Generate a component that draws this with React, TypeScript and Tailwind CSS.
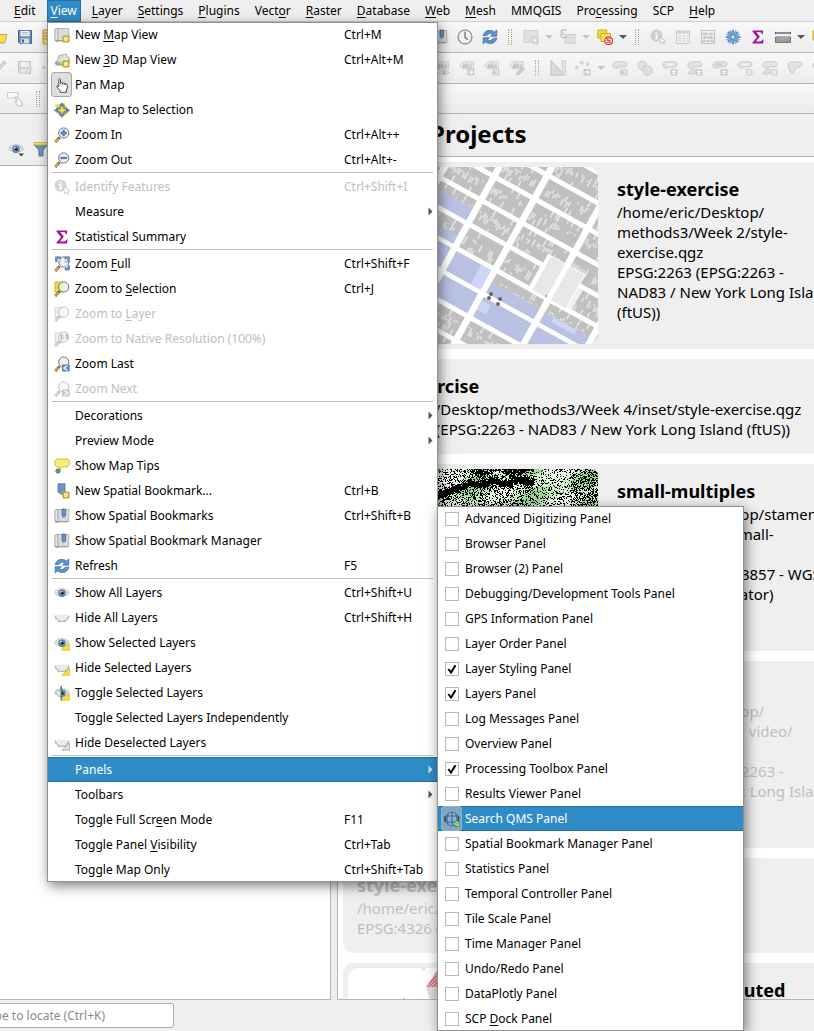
import React, { useMemo } from 'react';

type IconProps = { name: string; dim?: boolean };

const star = (
  <g>
    <rect x="8.5" y="8.5" width="7" height="7" rx="1" fill="#c9a81c" />
    <path d="M12 9.700v4.600M10 10.800l4 2.400M14 10.800l-4 2.400" stroke="#fff" strokeWidth="1.200" />
    <circle cx="12" cy="12" r=".7" fill="#c9a81c" />
  </g>
);

const lens = (
  <g>
    <path d="M5.600 10.400L1.200 15" stroke="#5b4a25" strokeWidth="2.600" />
    <path d="M4.800 11.400L1.200 14.900" stroke="#e5b73b" strokeWidth="1.500" />
    <circle cx="9.700" cy="6" r="5.100" fill="#eeefeb" fillOpacity=".92" stroke="#77797a" strokeWidth="1" />
  </g>
);

const eye = (
  <g>
    <path d="M.8 8.500Q8 2.500 15.200 8.500Q8 14 .8 8.500z" fill="#f1f1ef" stroke="#b5b8b8" strokeWidth="1" />
    <path d="M.8 6.500Q8 .8 15.200 6.500" fill="none" stroke="#b0b3b3" strokeWidth=".9" />
    <circle cx="8" cy="8.200" r="3.400" fill="#6b96c4" stroke="#48698f" strokeWidth=".8" />
    <circle cx="8.300" cy="8.200" r="1.500" fill="#17222e" />
    <circle cx="6.900" cy="6.800" r=".7" fill="#fff" />
  </g>
);

const lid = (
  <g>
    <path d="M1.500 5.500Q8 3.500 14.500 5.500Q13.500 11 8 11.500Q2.500 11 1.500 5.500z" fill="#ebebe8" />
    <path d="M1 5.500Q2 11 8 11.500Q14 11 15 5.500M1.500 9l1.500-1M4 12l1-1.500M14.500 9L13 8M12 12l-1-1.500" fill="none" stroke="#a5a6a5" strokeWidth="1" />
  </g>
);

const book = (
  <g>
    <path d="M.8 2.500Q2.500 .8 4 1.500V13.500H1z" fill="#e9e9e9" stroke="#8f8f8f" strokeWidth=".8" />
    <path d="M4 1.500h10.800v12H4z" fill="#dadada" stroke="#a9a9a9" strokeWidth=".8" />
    <path d="M1 13.500Q3 15.500 5 13.800H14" fill="none" stroke="#8f8f8f" strokeWidth=".9" />
  </g>
);

const label = (
  <g>
    <path d="M.5 5.500L4 1.500H14.500V9H4z" fill="#d9d6be" stroke="#a9a795" strokeWidth=".8" />
    <path d="M4 4.800h2v3H4V6.300h2M7.500 2.800v5h1.800V5H7.500M13 5h-1.800v2.800H13" fill="none" stroke="#66665f" strokeWidth=".8" />
  </g>
);

const blob = (
  <path d="M.8 5Q1.500 .8 7 2Q14.500 .5 15.200 4Q15 7.500 11 7Q7 6 5.500 8Q.8 8.500 .8 5z" fill="#cfcfc6" stroke="#8f8f88" strokeWidth=".9" />
);

const badge = <rect x="8.500" y="9" width="7" height="6.500" rx="1" fill="#9c9c97" />;
const arrow = <path d="M9.500 12.200h4M11.800 10.200l2.200 2-2.200 2" stroke="#fff" strokeWidth="1.200" fill="none" />;
const turn = <path d="M10.500 13.800Q13.800 14.500 13.800 12T10.500 10.800" stroke="#fff" strokeWidth="1.200" fill="none" />;
const spark = <path d="M12 9.800v4.800M10 10.900l4 2.500M14 10.900l-4 2.500" stroke="#fff" strokeWidth="1.200" />;
const cross = (
  <g>
    <rect x="9" y="9" width="6.500" height="6.500" rx="1" fill="#cfa9a3" />
    <path d="M10.500 10.500l3.500 3.500M14 10.500l-3.500 3.500" stroke="#fff" strokeWidth="1.200" />
  </g>
);
const tail = <path d="M.8 13.500Q3 9 8 9V13Q4 15.500 .8 13.500z" fill="#cfcfc6" stroke="#8f8f88" strokeWidth=".8" />;

const refresh = (
  <g fill="#5d93cf" stroke="#3669a8" strokeWidth=".7">
    <path d="M1 6.500Q3 1 8.500 1.400Q11 1.700 12.500 3L14.800 1V7.200H8.600L10.600 5Q7.500 2.800 4.800 6.500z" />
    <path d="M15 9.200Q13 14.900 7.500 14.500Q5 14.200 3.500 12.900L1.200 14.900V8.700H7.400L5.400 10.900Q8.500 13.100 11.200 9.200z" />
  </g>
);

const cursor = <path d="M9.500 7.500L10.500 15l1.700-1.800 1.500 2.300 1.200-.8-1.500-2.200 2.100-.7z" fill="#fff" stroke="#7b7b7b" strokeWidth=".8" />;

const glyphs: Record<string, React.ReactNode> = {
  mapview: <g>{book}{star}</g>,
  map3d: (
    <g>
      <path d="M2 11L5 3.500l7-1.500 3.500 5v4z" fill="#d2d3d1" stroke="#a4a6a4" strokeWidth=".8" />
      <path d="M4 8l9.500-2M7 3.500l1.500 7M10 3l3.500 7" stroke="#f4f4f4" strokeWidth=".9" />
      <path d="M.5 10.500Q3 8 5.500 11.500H9v2H2z" fill="#9fa2a0" />
      {star}
    </g>
  ),
  hand: (
    <path
      d="M4.800 9V2.400Q5.500 1 6.500 2.400V6.500M6.500 6.200Q7.500 4.800 8.700 6.200M8.700 6.200V7.500M8.700 6.500Q9.800 5.300 11 6.700V8M11 7.200Q13.200 6.200 13.300 8.500V11L12.300 13V15.300H6.300V14L2.500 9.300Q2.800 7.800 4.800 9.700V9"
      fill="#fff"
      stroke="#4a4a4a"
      strokeWidth="1"
      strokeLinejoin="round"
    />
  ),
  panselect: (
    <g>
      <path d="M.8 2.500L10.500 1 14.500 9 12.500 13 5 14z" fill="#f3df4b" />
      <g fill="#5d87b5" stroke="#3f6590" strokeWidth=".5">
        <path d="M8 .8l2.600 3.400H5.400zM8 15.500l3-3.800H5zM.3 8.300l3.800-2.800v5.600zM15.700 8.300l-3.800-2.800v5.600zM5 5.500l2 .3-1.500 1.700zM11 5.500l-2 .3 1.500 1.700zM5 11l2-.3-1.500-1.700zM11 11l-2-.3 1.500-1.700z" />
      </g>
      <circle cx="8" cy="8.300" r="1.500" fill="#f3df4b" />
    </g>
  ),
  zoomin: <g>{lens}<path d="M9.700 2.800v6.400M6.500 6h6.400" stroke="#4f80b8" strokeWidth="2.400" /></g>,
  zoomout: <g>{lens}<path d="M6.300 6h6.800" stroke="#4f80b8" strokeWidth="2.200" /></g>,
  identify: (
    <g>
      <circle cx="6.500" cy="6.500" r="5.600" fill="#9ba6b1" stroke="#84909b" strokeWidth=".8" />
      <path d="M6.500 2.800v1.600M5.300 5.800h1.400V9.500M5 9.600h3" stroke="#fff" strokeWidth="1.500" fill="none" />
      {cursor}
    </g>
  ),
  sigma: <path d="M2.500 1.500H13V5H12Q11.500 3 9.500 3H6.300L9.800 7.700 5.900 12.600H10Q12 12.600 12.500 10.500H13.500L13 14.500H2.500V13.600L7 8.200 2.500 2.400z" fill="#a3129f" />,
  zoomfull: (
    <g>
      {lens}
      <path d="M1.500 .8h5v5h-5zM11 .8h4.500v5H11zM11 9.500h4.500V14H11z" fill="#6b94c1" stroke="#4d7199" strokeWidth=".6" />
      <path d="M4 3.500l3.500 2.500M13 3.500l-3 2M13 11l-3-3M7 3.800h-3v2.800M10.500 3.800h2.500v2M13 8.500V11h-2.500" stroke="#f3f5f7" strokeWidth="1" fill="none" />
    </g>
  ),
  zoomsel: <g><path d="M1 1h8v10H1z" fill="#f0d73b" stroke="#c4a926" strokeWidth=".8" />{lens}<path d="M6.500 3Q9 1.500 9.500 10Q6 9.500 6.500 3z" fill="#f5eeb4" /></g>,
  zoomlayer: <g><path d="M1 1.500h8v10H1z" fill="#ddd" stroke="#999" strokeWidth=".8" />{lens}</g>,
  zoomnative: (
    <g>
      <path d="M1 2h8v10H1z" fill="#ddd" stroke="#999" strokeWidth=".8" />
      {lens}
      <path d="M6.500 4.500l1-.7V8.500M12 4.500l1-.7V8.500M9.800 4.500v1M9.800 7v1" stroke="#333" strokeWidth="1.200" fill="none" />
    </g>
  ),
  zoomlast: <g>{lens}<rect x="8" y="8.500" width="7.800" height="7" fill="#5f8cc0" /><path d="M13.300 9.800L10 12l3.300 2.200" stroke="#fff" strokeWidth="1.300" fill="none" /></g>,
  zoomnext: <g>{lens}<rect x="8" y="8.500" width="7.800" height="7" fill="#888" /><path d="M10.500 9.800L13.800 12l-3.300 2.200" stroke="#fff" strokeWidth="1.300" fill="none" /></g>,
  tips: (
    <g>
      <path d="M3 1H13.500Q15.500 1.500 15.400 5T13 9H8.500L5.500 12V9H3Q.8 8.500 .8 5T3 1z" fill="#f8ec74" stroke="#cdb741" strokeWidth=".9" />
      <circle cx="4" cy="13" r="2.300" fill="#67997a" stroke="#49705a" strokeWidth=".6" />
    </g>
  ),
  newbm: <g><path d="M4 .8H11V13L7.500 11.500 4 9z" fill="#6b96c4" stroke="#4d759f" strokeWidth=".8" />{star}</g>,
  bookmarks: <g>{book}<path d="M8 1h3.600v6.800L9.800 9.500 8 7.800z" fill="#6590c0" stroke="#3e6798" strokeWidth=".7" /></g>,
  refresh,
  eye,
  lid,
  eyesel: <g>{eye}<path d="M8 15.200h7.500V8.500L13 10.500 8 12.500z" fill="#f7e03b" stroke="#d4b91b" strokeWidth=".6" /></g>,
  lidsel: <g><path d="M8 15.200h7.500V8z" fill="#f7e03b" stroke="#d4b91b" strokeWidth=".8" />{lid}</g>,
  toggle: <g>{eye}<path d="M8 15.200h7.500V8.500L13 10.500 8 12.500z" fill="#f7e03b" stroke="#d4b91b" strokeWidth=".6" /><path d="M1.500 6.500Q4 5 7 5V12Q2.500 11.500 1.500 6.500z" fill="#e4e4e1" stroke="#a5a6a5" strokeWidth=".7" /><path d="M7.300 1v14.500" stroke="#47805a" strokeWidth="1.400" /></g>,
  liddesel: <g><path d="M8 15.200h7.500V8z" fill="#e3e3e3" stroke="#a8a8a8" strokeWidth=".8" />{lid}</g>,
  globe: (
    <g>
      <circle cx="8" cy="8" r="6.800" fill="#8fb0cc" stroke="#47709a" strokeWidth="1" />
      <path d="M8 1v14M4.500 2.500Q1.500 8 4.500 13.500M11.500 2.500Q14.500 8 11.500 13.500M2 5h12M2 11h12" stroke="#3a69a3" strokeWidth="1.100" fill="none" />
      <path d="M1 5v6M.5 8h2M14.500 5v5" stroke="#34404c" strokeWidth="1.400" />
      <rect x="10" y="10" width="6" height="6" rx="1" fill="#4e9c58" />
      <circle cx="12.800" cy="12.600" r="1.400" fill="none" stroke="#fff" strokeWidth=".8" />
      <path d="M14 14l1 1" stroke="#fff" />
    </g>
  ),
  folder: <path d="M0 4h6l1.500 1.500H15L12.500 14H0z" fill="#fbdc55" stroke="#c9a227" strokeWidth=".9" />,
  save: (
    <g>
      <path d="M1.500 1.500h13v13H3l-1.500-1.500z" fill="#6c8fb5" stroke="#446587" strokeWidth="1" />
      <path d="M3.500 1.800h9v5.400h-9z" fill="#eef1f4" />
      <path d="M4 9.500h8v5H4z" fill="#d6dde5" />
      <path d="M5 10.500h2v3H5z" fill="#446587" />
      <path d="M5 3.500h6M5 5.300h6" stroke="#9aa9b8" strokeWidth=".7" />
    </g>
  ),
  layout: <path d="M1 1h13v14H1zM1 4h4M1 7h4M1 10h4" fill="#f4dc72" stroke="#b89a32" strokeWidth="1" />,
  pencil: <path d="M2 14L4 9 12 1l2 2-8 8z" fill="#bbb" stroke="#888" />,
  saveedit: (
    <g>
      <path d="M1.500 1.500h12v12H3l-1.500-1.500z" fill="#b5b5b5" stroke="#888" />
      <path d="M3.500 1.800h8v5h-8z" fill="#eee" />
      <path d="M4 9h6v4.500H4z" fill="#ddd" />
      <path d="M8 14l1-3 4-4 2.500 2-4.500 4.500z" fill="#ccc" stroke="#999" strokeWidth=".7" />
    </g>
  ),
  dots: (
    <g>
      <g fill="#b4b4ac" stroke="#8e8e88" strokeWidth=".7">
        <circle cx="1.800" cy="7.500" r="1.300" /><circle cx="6.500" cy="2.500" r="1.500" /><circle cx="12.500" cy="4" r="1.500" />
      </g>
      {badge}
      {arrow}
    </g>
  ),
  clock: (
    <g>
      <circle cx="8" cy="8" r="7" fill="#f2f3f1" stroke="#858987" strokeWidth="1.200" />
      <path d="M8 3v5.200l2.800 2.600" fill="none" stroke="#6a6d6c" strokeWidth="1.300" />
      <path d="M8 1.500v1M8 13.500v1M1.500 8h1M13.500 8h1" stroke="#858987" />
    </g>
  ),
  select: <g><path d="M1 1.500h14v12H1z" fill="#d0ccb2" stroke="#88887f" strokeWidth="1" strokeDasharray="2 1.200" />{cursor}</g>,
  selectexp: (
    <g>
      <rect x="5" y="5.500" width="10" height="9" fill="#cdc9ae" stroke="#a09d8c" strokeWidth=".8" />
      <path d="M6.500 1.500Q3 0 1.500 2T4 4.500Q0 5 1.500 7.500T7 7.500" fill="none" stroke="#7a7a74" strokeWidth="1.400" />
    </g>
  ),
  deselect: (
    <g>
      <path d="M.8 1h9v8h-9z" fill="#f5da3c" stroke="#c8a81c" strokeWidth=".9" />
      <path d="M4 4.500h9.500v8H4z" fill="#fbe552" stroke="#c8a81c" strokeWidth=".9" />
      <circle cx="11.700" cy="11.700" r="3.900" fill="#fff" stroke="#d9342f" strokeWidth="1.300" />
      <path d="M9.500 9.800h4.400M9.300 11.700h4.800M9.600 13.500h4.200M9.200 9.200l5 5" stroke="#d9342f" strokeWidth=".9" />
    </g>
  ),
  table: (
    <g>
      <rect x="1.500" y="2" width="13" height="12.500" fill="#f3f3f3" stroke="#999" strokeWidth=".9" />
      <path d="M1.500 2h13v2.500h-13z" fill="#aaa" />
      <path d="M3 7h3M7.500 7h2.500M11.500 7h2M3 9.500h3M7.500 9.500h2.500M11.500 9.500h2M3 12h3M7.500 12h2.500M11.500 12h2" stroke="#aaa" />
    </g>
  ),
  abacus: (
    <g fill="none" stroke="#8c8c8c">
      <rect x="1.500" y="1.500" width="13" height="13" />
      <path d="M1.500 5h13M1.500 8.500h13M1.500 12h13" />
      <path d="M4 3.500v3M6.500 3.500v3M11 3.500v3M5 7v3M9 7v3M11.500 7v3M4 10.500v3M8 10.500v3M12 10.500v3" strokeWidth="1.500" />
    </g>
  ),
  gear: (
    <g>
      <g stroke="#5d92cc" strokeWidth="2.200">
        <path d="M8 .8v14.400M.8 8h14.400M2.900 2.900l10.200 10.200M13.100 2.900L2.900 13.100" />
        <path d="M5.200 1.300l5.600 13.400M10.800 1.300L5.200 14.700M1.300 5.200l13.400 5.600M1.300 10.800l13.400-5.600" strokeWidth="1" />
      </g>
      <circle cx="8" cy="8" r="5" fill="#6d9dd2" />
      <circle cx="8" cy="8" r="2" fill="#edf2f7" stroke="#4679b2" strokeWidth=".8" />
    </g>
  ),
  measure: (
    <g>
      <path d="M.5 4h15" stroke="#4c6184" strokeWidth="1.400" />
      <path d="M.5 2.800v2.400M15.500 2.800v2.400" stroke="#4c6184" />
      <path d="M.5 8h15v5.500H.5z" fill="#9b9b9b" stroke="#6d6d6d" strokeWidth=".9" />
      <path d="M3 8v2M5.500 8v2M8 8v3M10.500 8v2M13 8v2" stroke="#ddd" strokeWidth=".6" />
    </g>
  ),
  tip2: <path d="M1 2h14v9H1z" fill="#f8e45c" stroke="#c8a81c" />,
  labeleye: <g>{label}<path d="M5 12.500Q10 8 15.500 12.500Q10 16.500 5 12.500z" fill="#eee" stroke="#777" strokeWidth=".8" /><circle cx="10.300" cy="12.400" r="1.600" fill="#777" /></g>,
  labelmove: <g>{label}{badge}{arrow}</g>,
  labelrot: <g>{label}{badge}{turn}</g>,
  labeledit: <g>{label}<path d="M7.500 15l1-3 5-4.500 2 2-5 4.500z" fill="#a5a59b" stroke="#777" strokeWidth=".7" /></g>,
  cad: (
    <g>
      <path d="M1 1v14H14z" fill="#dcc5bf" stroke="#92807b" strokeWidth="1.100" />
      <path d="M4 8.500v3.500h3.500z" fill="#f5f5f5" stroke="#92807b" strokeWidth=".7" />
      <path d="M12 .5h3.500v14H12z" fill="#d2d2c2" stroke="#999" strokeWidth=".7" />
    </g>
  ),
  blobrot: <g>{blob}{badge}{turn}</g>,
  simplify: <g fill="#cdcdc4" stroke="#8f8f88" strokeWidth=".9"><path d="M.8 3.500l3.500-2.500 4.500 1.500 1.500 5-5 2.500-3.500-2z" /><circle cx="10.500" cy="10.500" r="4.700" /><path d="M5.500 5.500l5.500 5.500" /></g>,
  ring: <g>{blob}<path d="M5 4.500h6" stroke="#fff" strokeWidth="1.800" />{badge}{spark}</g>,
  part: <g>{blob}{tail}{badge}{spark}</g>,
  fillring: <g>{blob}<ellipse cx="7" cy="4.500" rx="3.500" ry="1.500" fill="#aaa" />{badge}{spark}</g>,
  delring: <g>{blob}<path d="M5 4.500h6" stroke="#fff" strokeWidth="1.800" />{cross}</g>,
  delpart: <g>{blob}{tail}{cross}</g>,
  reshape: <path d="M1 4Q2 .8 8 2Q15.500 .8 15 5Q14 8 10.500 7.500Q7.500 9 5.500 14Q1 10 1 4z" fill="#cfcfc6" stroke="#8f8f88" strokeWidth=".9" />,
  selecthand: (
    <g>
      <path d="M.5 1.500h10.500v5.500H.5z" fill="#fff" stroke="#999" strokeWidth=".9" />
      <path d="M8.500 6l1.500 4.500-2-.5 2.500 5H15V10.500L12 9 9.500 5.500z" fill="#fff" stroke="#777" strokeWidth=".9" />
    </g>
  ),
  filter: (
    <g>
      <path d="M1 3.500h14L10 9v6H6V9z" fill="#6b96c4" stroke="#48719c" strokeWidth=".9" />
      <path d="M1 1.500h14v2.500H1z" fill="#f2e34f" stroke="#bba92d" strokeWidth=".7" />
    </g>
  ),
  eyedrop: <g>{eye}<path d="M10.500 12.500h5.500L13.300 15.500z" fill="#444" /></g>,
};

function Icon({ name, dim }: IconProps) {
  return (
    <svg viewBox="0 0 16 16" aria-hidden="true" className={dim ? 'h-4 w-4 shrink-0 opacity-45 grayscale-75' : 'h-4 w-4 shrink-0'}>
      {glyphs[name]}
    </svg>
  );
}

/* "_" before a letter marks its mnemonic. */
function Mnemonic({ text }: { text: string }) {
  const i = text.indexOf('_');
  if (i < 0) return <>{text}</>;
  return (
    <>
      {text.slice(0, i)}
      <span className="underline underline-offset-2">{text[i + 1]}</span>
      {text.slice(i + 2)}
    </>
  );
}

const menuTitles = ['_Edit', '_View', '_Layer', '_Settings', '_Plugins', 'Vect_or', '_Raster', '_Database', '_Web', '_Mesh', 'MMQGIS', 'Pro_cessing', 'SCP', '_Help'];

function MenuBar() {
  return (
    <nav className="flex h-[22px] shrink-0 gap-[7px] border-b border-[#cfcfcf] bg-[#efefef] pl-[10px]">
      {menuTitles.map((t) => (
        <button
          key={t}
          className={
            t === '_View'
              ? 'h-[22px] border border-[#2472a4] bg-[#308cc6] px-[3px] text-white'
              : 'h-[22px] px-1'
          }
        >
          <Mnemonic text={t} />
        </button>
      ))}
    </nav>
  );
}

function Tool({ name, dim }: IconProps) {
  return (
    <button aria-label={name} className="flex h-full w-[25px] shrink-0 items-center justify-center">
      <Icon name={name} dim={dim} />
    </button>
  );
}

function Caret({ dim }: { dim?: boolean }) {
  return (
    <svg viewBox="0 0 12 12" aria-hidden="true" className="h-3 w-3 shrink-0">
      <path d="M2 4h8L6 8z" fill={dim ? '#c4c4c4' : '#555'} />
    </svg>
  );
}

function Handle() {
  return (
    <span className="flex h-full w-4 shrink-0 items-center justify-center gap-[2px]">
      <span className="h-4 border-l border-dotted border-[#a5a5a5]" />
      <span className="h-4 border-l border-dotted border-[#a5a5a5]" />
    </span>
  );
}

const toolbar = 'flex shrink-0 items-center overflow-hidden border-b border-[#b4b4b4] bg-linear-to-b from-[#f8f8f8] to-[#ececec]';

function Toolbars() {
  return (
    <>
      <div className={toolbar + ' h-[31px]'}>
        <div className="-ml-[13px] flex h-full items-center">
          <Tool name="folder" /><Tool name="save" /><Tool name="layout" />
          <span className="w-[365px] shrink-0" />
          <Tool name="bookmarks" /><Tool name="clock" /><Tool name="refresh" />
          <Handle />
          <Tool name="select" dim /><Caret dim />
          <Tool name="selectexp" dim /><Caret dim />
          <Tool name="deselect" /><Caret />
          <Handle />
          <Tool name="identify" dim /><Tool name="table" dim /><Tool name="abacus" dim />
          <Tool name="gear" /><Tool name="sigma" /><Tool name="measure" /><Caret />
          <Tool name="tip2" />
        </div>
      </div>
      <div className={toolbar + ' h-[31px]'}>
        <div className="-ml-[13px] flex h-full items-center">
          <Tool name="pencil" dim /><Tool name="saveedit" dim /><Tool name="dots" dim />
          <span className="w-[367px] shrink-0" />
          <Tool name="labeleye" dim /><Tool name="labelmove" dim /><Tool name="labelrot" dim /><Tool name="labeledit" dim />
          <Handle />
          <Tool name="cad" dim /><Tool name="dots" dim /><Caret dim />
          <Tool name="blobrot" dim /><Tool name="simplify" dim /><Tool name="ring" dim /><Tool name="part" dim />
          <Tool name="fillring" dim /><Tool name="delring" dim /><Tool name="delpart" dim /><Tool name="reshape" dim />
          <Tool name="blobrot" dim />
        </div>
      </div>
      <div className={toolbar + ' h-[30px] gap-[3px] pl-[2px]'}>
        <Tool name="selecthand" dim />
        <Handle />
      </div>
    </>
  );
}

function random(seed: number) {
  let s = seed;
  return () => {
    s = (s * 1664525 + 1013904223) % 4294967296;
    return s / 4294967296;
  };
}

const avenues = [-190, -140, -94, -46, 0, 61, 118, 170];
const blueBlocks: Record<string, number> = { '2:-2': 0.6, '2:-1': 0.4, '2:0': 1, '3:0': 1, '3:1': 0.9, '4:0': 0.55, '4:1': 0.7, '5:0': 0.5, '5:1': 0.8, '1:-2': 0.8 };

/* Street grid drawn unrotated, blocks 27 units apart along each avenue. */
function CityMap() {
  const parts = useMemo(() => {
    const rnd = random(7);
    const out: React.ReactNode[] = [];
    for (let a = 0; a < avenues.length - 1; a++) {
      for (let r = -8; r < 6; r++) {
        let x = avenues[a] + 4;
        let w = avenues[a + 1] - avenues[a] - 7;
        const y = r * 27 + 3;
        const h = 22;
        const k = a + ':' + r;
        if (a === 4 && r === -1) w = 34;
        if (a === 5 && r === -1) {
          x += 22;
          w -= 22;
        }
        out.push(<rect key={k} x={x} y={y} width={w} height={h} fill="#c0c0c0" />);
        let d = '';
        for (let i = 2; i < w - 3; i += 2.5) {
          if (rnd() < 0.75) d += `M${x + i} ${y + 6 + rnd() * 5}v${1 + rnd() * 8}`;
          if (rnd() < 0.22) d += `M${x + i} ${y}v${3 + rnd() * 4}`;
          if (rnd() < 0.22) d += `M${x + i} ${y + h}v-${3 + rnd() * 4}`;
        }
        out.push(<path key={k + 'c'} d={d} stroke="#e2e2e2" strokeWidth="1.800" />);
        const share = blueBlocks[k];
        if (share) {
          const top = share < 0.7 ? y + h * (1 - share) : y;
          out.push(<rect key={k + 'f'} x={x} y={top} width={w} height={y + h - top} fill="#b9c2e2" />);
          if (k === '3:0') out.push(<rect key={k + 'p'} x={x + w - 11} y={y} width={11} height={h} fill="#ccd6f6" />);
          if (k === '4:1') out.push(<rect key={k + 'p'} x={x} y={y + 4} width={10} height={10} fill="#ccd6f6" />);
          if (k === '5:0') out.push(<rect key={k + 'p'} x={x + 10} y={top} width={26} height={5} fill="#ccd6f6" />);
        }
      }
    }
    return out;
  }, []);
  return (
    <svg viewBox="0 0 250 177" aria-hidden="true" className="h-[177px] w-[250px] shrink-0 rounded-[10px]">
      <rect width="250" height="177" fill="#efefef" />
      <g transform="translate(147 102) rotate(29)">
        {avenues.map((x) => (
          <rect key={x} x={x - 3} y="-220" width="6" height="440" fill="#fff" />
        ))}
        {[-7, -6, -5, -4, -3, -2, -1, 0, 1, 2, 3, 4].map((r) => (
          <rect key={r} x="-220" y={r * 27 - 2} width="440" height="5" fill="#fff" />
        ))}
        {parts}
        <path d="M39 -39h43v42h-43z" fill="#fff" />
        <path d="M43 -38h16v38h-16zM64 -38h17v38h-17z" fill="#e8e8e8" />
      </g>
      <g fill="#6a6a6a">
        <circle cx="143" cy="127" r="2" /><circle cx="141" cy="131" r="2" /><circle cx="152" cy="132" r="2" /><circle cx="150" cy="137" r="2" />
        <circle cx="198" cy="129" r="1" fill="#999" />
      </g>
    </svg>
  );
}

function StippleMap() {
  const { black, greens } = useMemo(() => {
    const rnd = random(21);
    let b = '';
    const g = ['', '', ''];
    for (let y = 0; y < 44; y++) {
      for (let x = 80; x < 250; x++) {
        const mid = x < 120 ? 26 - (x - 90) * 0.35 : 15 - (x - 120) * 0.06 + Math.sin(x / 4) * 1.5;
        const off = Math.abs(y - mid);
        let p = x > 222 ? 0.5 : x > 186 ? 0.24 : 0.36;
        if (x < 186) p = Math.max(p, 1.25 - off / 7);
        if (x > 122 && x < 186 && y < 14 && Math.sin(x / 5) + Math.cos(y / 3) > 0) p = 0.85;
        if (rnd() < p) b += `M${x} ${y}h1v1h-1z`;
        else {
          const tone = Math.sin(x / 9) + Math.cos(y / 5 + x / 14) + rnd() * 1.4;
          const i = tone > 1.5 ? 0 : tone > 0.6 ? 1 : tone > -0.6 ? 2 : -1;
          if (i >= 0) g[i] += `M${x} ${y}h1v1h-1z`;
        }
      }
    }
    return { black: b, greens: g };
  }, []);
  return (
    <svg viewBox="0 0 250 177" aria-hidden="true" shapeRendering="crispEdges" className="h-[177px] w-[250px] shrink-0 rounded-[6px] bg-[#f4faf2]">
      <path d={greens[0]} fill="#9bd397" />
      <path d={greens[1]} fill="#c3e6bd" />
      <path d={greens[2]} fill="#dff2db" />
      <path d={black} fill="#000" />
    </svg>
  );
}

function BoroughMap() {
  return (
    <svg viewBox="0 0 250 177" aria-hidden="true" className="h-[177px] w-[250px] shrink-0 rounded-[10px] bg-white">
      <defs>
        <pattern id="hatch" width="2.500" height="2.500" patternUnits="userSpaceOnUse" patternTransform="rotate(45)">
          <rect width="2.500" height="2.500" fill="#f0c4ca" />
          <rect width="1.300" height="2.500" fill="#d0596b" />
        </pattern>
      </defs>
      <path d="M78 19L91 0H150V19z" fill="url(#hatch)" />
      <path d="M78 19H150V60H78L82 32z" fill="#dcdcdc" />
      <path d="M54 33l2-3 2 3zM74 1h3M65 32h2" fill="#bbb" stroke="#bbb" />
    </svg>
  );
}

type Project = { title: string; lines: string[]; thumb?: React.ReactNode; missing?: boolean };

const projects: Project[] = [
  {
    title: 'style-exercise',
    lines: ['/home/eric/Desktop/', 'methods3/Week 2/style-', 'exercise.qgz', 'EPSG:2263 (EPSG:2263 -', 'NAD83 / New York Long Island', '(ftUS))'],
    thumb: <CityMap />,
  },
  {
    title: 'style-exercise',
    lines: ['/home/eric/Desktop/methods3/Week 4/inset/style-exercise.qgz', 'EPSG:2263 (EPSG:2263 - NAD83 / New York Long Island (ftUS))'],
  },
  {
    title: 'small-multiples',
    lines: ['/home/eric/Desktop/stamen-', 'multiples-maps/small-', 'multiples.qgz', 'EPSG:3857 (EPSG:3857 - WGS', '84 / Pseudo-Mercator)'],
    thumb: <StippleMap />,
  },
  {
    title: 'style-exercise',
    lines: ['/home/eric/Desktop/', 'methods3/Week 5 video/', 'style-exercise.qgz', 'EPSG:2263 (EPSG:2263 -', 'NAD83 / New York Long Island'],
    thumb: <span className="h-[177px] w-[250px] shrink-0 rounded-[10px] bg-white" />,
    missing: true,
  },
  {
    title: 'style-exercise',
    lines: ['/home/eric/Desktop/style-exercise.qgz', 'EPSG:4326 (EPSG:4326 - WGS 84)'],
    missing: true,
  },
  {
    title: 'shapes-distributed',
    lines: ['/home/eric/Desktop/'],
    thumb: <BoroughMap />,
  },
];

function ProjectCard({ project }: { project: Project }) {
  return (
    <li
      className={
        (project.thumb ? 'gap-[5px] p-[5px] ' : 'px-0 ') +
        'flex shrink-0 rounded-l-[10px] bg-[#efefef] ' +
        (project.missing ? 'text-[#bfbfbf]' : 'text-black')
      }
    >
      {project.thumb}
      <div className={project.thumb ? 'pt-[9px] pl-[14px]' : 'px-[14px] pt-[14px] pb-[15px]'}>
        <h2 className="text-[18px] leading-[26px] font-bold whitespace-nowrap">{project.title}</h2>
        {project.lines.map((l) => (
          <p key={l} className="text-[15px] leading-[20px] whitespace-nowrap">{l}</p>
        ))}
      </div>
    </li>
  );
}

type Entry = { icon?: string; text: string; keys?: string; off?: boolean; sub?: boolean; on?: boolean; pressed?: boolean } | null;

const entries: Entry[] = [
  { icon: 'mapview', text: 'New _Map View', keys: 'Ctrl+M' },
  { icon: 'map3d', text: 'New _3D Map View', keys: 'Ctrl+Alt+M' },
  { icon: 'hand', text: 'Pan Map', pressed: true },
  { icon: 'panselect', text: 'Pan Map to Selection' },
  { icon: 'zoomin', text: 'Zoom In', keys: 'Ctrl+Alt++' },
  { icon: 'zoomout', text: 'Zoom Out', keys: 'Ctrl+Alt+-' },
  null,
  { icon: 'identify', text: 'Identify Features', keys: 'Ctrl+Shift+I', off: true },
  { text: 'Measure', sub: true },
  { icon: 'sigma', text: 'Statistical Summary' },
  null,
  { icon: 'zoomfull', text: 'Zoom _Full', keys: 'Ctrl+Shift+F' },
  { icon: 'zoomsel', text: 'Zoom to _Selection', keys: 'Ctrl+J' },
  { icon: 'zoomlayer', text: 'Zoom to _Layer', off: true },
  { icon: 'zoomnative', text: 'Zoom to Native Resolution (100%)', off: true },
  { icon: 'zoomlast', text: 'Zoom Last' },
  { icon: 'zoomnext', text: 'Zoom Next', off: true },
  null,
  { text: 'Decorations', sub: true },
  { text: 'Preview Mode', sub: true },
  { icon: 'tips', text: 'Show Map Tips' },
  { icon: 'newbm', text: 'New Spatial Bookmark...', keys: 'Ctrl+B' },
  { icon: 'bookmarks', text: 'Show Spatial Bookmarks', keys: 'Ctrl+Shift+B' },
  { icon: 'bookmarks', text: 'Show Spatial Bookmark Manager' },
  { icon: 'refresh', text: 'Refresh', keys: 'F5' },
  null,
  { icon: 'eye', text: 'Show All Layers', keys: 'Ctrl+Shift+U' },
  { icon: 'lid', text: 'Hide All Layers', keys: 'Ctrl+Shift+H' },
  { icon: 'eyesel', text: 'Show Selected Layers' },
  { icon: 'lidsel', text: 'Hide Selected Layers' },
  { icon: 'toggle', text: 'Toggle Selected Layers' },
  { text: 'Toggle Selected Layers Independently' },
  { icon: 'liddesel', text: 'Hide Deselected Layers' },
  null,
  { text: 'Panels', sub: true, on: true },
  { text: 'Toolbars', sub: true },
  { text: 'Toggle Full Scr_een Mode', keys: 'F11' },
  { text: 'Toggle Panel _Visibility', keys: 'Ctrl+Tab' },
  { text: 'Toggle Map Only', keys: 'Ctrl+Shift+Tab' },
];

function ViewMenu() {
  return (
    <div role="menu" className="absolute top-[22px] left-[47px] flex w-[391px] flex-col bg-white px-px shadow-[inset_0_0_0_1px_#8f8f8f,2px_4px_12px_rgba(0,0,0,0.5)]">
      {entries.map((e, i) =>
        e === null ? (
          <div key={i} role="separator" className="mx-1 h-[2px] border-t border-[#bdbdbd]" />
        ) : (
          <button
            key={i}
            role="menuitem"
            disabled={e.off}
            className={
              'flex h-[25px] items-center text-left ' +
              (e.on ? 'border-y border-[#2472a4] bg-[#308cc6] text-white' : e.off ? 'text-[#bebebe]' : 'text-black')
            }
          >
            <span
              className={
                e.pressed
                  ? 'ml-[3px] flex h-[25px] w-[21px] items-center justify-center rounded-[3px] border border-[#a8a8a8] bg-[#dedede]'
                  : 'ml-[3px] flex h-[25px] w-[21px] items-center justify-center'
              }
            >
              {e.icon && <Icon name={e.icon} dim={e.off} />}
            </span>
            <span className="ml-[3px] flex-1 whitespace-nowrap">
              <Mnemonic text={e.text} />
            </span>
            <span className="flex w-[93px] shrink-0 items-center whitespace-nowrap">
              {e.keys}
              {e.sub && (
                <svg viewBox="0 0 5 9" aria-hidden="true" className="mr-[4px] ml-auto h-[9px] w-[5px]">
                  <path d="M.5 .5L4.500 4.500L.5 8.500z" fill={e.on ? '#cfe3f1' : '#555'} />
                </svg>
              )}
            </span>
          </button>
        ),
      )}
    </div>
  );
}

const panels = [
  'Advanced Digitizing Panel', 'Browser Panel', 'Browser (2) Panel', 'Debugging/Development Tools Panel', 'GPS Information Panel',
  'Layer Order Panel', 'Layer Styling Panel', 'Layers Panel', 'Log Messages Panel', 'Overview Panel', 'Processing Toolbox Panel',
  'Results Viewer Panel', 'Search QMS Panel', 'Spatial Bookmark Manager Panel', 'Statistics Panel', 'Temporal Controller Panel',
  'Tile Scale Panel', 'Time Manager Panel', 'Undo/Redo Panel', 'DataPlotly Panel', 'SCP _Dock Panel',
];
const shown = ['Layer Styling Panel', 'Layers Panel', 'Processing Toolbox Panel'];

function PanelsMenu() {
  return (
    <div role="menu" className="absolute top-[506px] left-[437px] flex w-[307px] flex-col bg-white px-px shadow-[inset_0_0_0_1px_#8f8f8f,2px_4px_12px_rgba(0,0,0,0.5)]">
      {panels.map((p) =>
        p === 'Search QMS Panel' ? (
          <button key={p} role="menuitem" className="flex h-[25px] items-center border-y border-[#2472a4] bg-[#308cc6] text-left text-white">
            <span className="ml-[3px] flex h-[25px] w-[21px] items-center justify-center rounded-[3px] border border-[#8bb0cb] bg-[#7fa6c2]">
              <Icon name="globe" />
            </span>
            <span className="ml-[3px]">{p}</span>
          </button>
        ) : (
          <label key={p} className="flex h-[25px] items-center text-black">
            <span className="ml-[7px] grid h-[14px] w-[14px] place-items-center">
              <input
                type="checkbox"
                defaultChecked={shown.includes(p)}
                className="peer col-start-1 row-start-1 h-[14px] w-[14px] appearance-none border border-[#b8b8b8] bg-white"
              />
              <svg viewBox="0 0 10 10" aria-hidden="true" className="pointer-events-none col-start-1 row-start-1 hidden h-[10px] w-[10px] peer-checked:block">
                <path d="M1.300 5L4 8.500L8.500 1.200" fill="none" stroke="#000" strokeWidth="2" />
              </svg>
            </span>
            <span className="ml-[6px] whitespace-nowrap">
              <Mnemonic text={p} />
            </span>
          </label>
        ),
      )}
    </div>
  );
}

export default function App() {
  return (
    <div className="relative flex h-screen flex-col overflow-hidden bg-[#efefef] font-['Noto_Sans',sans-serif] text-[12px] leading-[20px] text-black">
      <MenuBar />
      <Toolbars />
      <main className="flex min-h-0 flex-1 gap-[6px]">
        <section className="flex w-[331px] shrink-0 flex-col border-r border-b border-[#b4b4b4] bg-white">
          <div className="flex h-[52px] shrink-0 items-center border-b border-[#b4b4b4] bg-[#efefef] pt-[19px] pl-[3px]">
            <Tool name="eyedrop" />
            <Tool name="filter" />
          </div>
        </section>
        <section className="flex min-w-0 flex-1 flex-col overflow-hidden border-b border-l border-[#b4b4b4] bg-white">
          <h1 className="flex h-[43px] shrink-0 items-center border-b border-[#b4b4b4] bg-[#efefef] pb-[3px] pl-[3px] text-[24px] font-bold whitespace-nowrap">
            Recent Projects
          </h1>
          <ul className="flex flex-col gap-[10px] pt-[5px] pl-[5px]">
            {projects.map((p, i) => (
              <ProjectCard key={i} project={p} />
            ))}
          </ul>
        </section>
      </main>
      <footer className="flex h-[31px] shrink-0 items-center bg-[#efefef]">
        <input
          aria-label="Locate"
          placeholder="Type to locate (Ctrl+K)"
          className="-ml-[44px] h-[25px] w-[218px] rounded-[3px] border border-[#acacac] bg-white pl-[25px] placeholder:text-[#8a8a8a]"
        />
      </footer>
      <ViewMenu />
      <PanelsMenu />
    </div>
  );
}
